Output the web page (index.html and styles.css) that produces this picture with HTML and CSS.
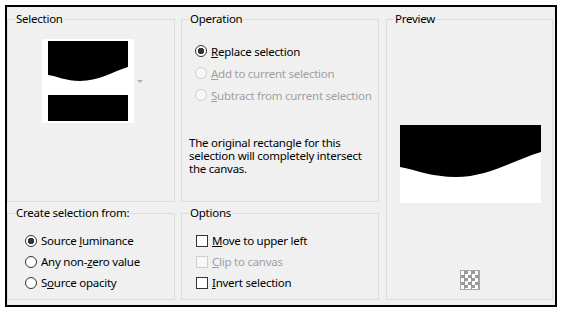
FILE: index.html
```html
<!DOCTYPE html>
<html lang="en">
<head>
  <meta charset="UTF-8">
  <title>Promote Selection</title>
  <link rel="stylesheet" href="styles.css">
</head>
<body>
  <div class="dialog">
    <div class="col col-left">
      <!-- Selection thumbnail -->
      <fieldset class="group group-tall">
        <legend>Selection</legend>
        <div class="thumb-row">
          <div class="thumb">
            <svg width="80" height="80" viewBox="0 0 80 80">
              <rect width="80" height="80" fill="#fff"/>
              <path d="M0 0 H80 V26 C64 31 50 40 32 40 C18 40 8 35 0 34 Z" fill="#000"/>
              <rect y="54" width="80" height="26" fill="#000"/>
            </svg>
          </div>
          <span class="drop-arrow"></span>
        </div>
      </fieldset>

      <fieldset class="group group-short">
        <legend>Create selection from:</legend>
        <div class="rows rows-source">
          <label class="row"><input type="radio" name="source" checked><span>Source <u>l</u>uminance</span></label>
          <label class="row"><input type="radio" name="source"><span>Any non-<u>z</u>ero value</span></label>
          <label class="row"><input type="radio" name="source"><span>S<u>o</u>urce opacity</span></label>
        </div>
      </fieldset>
    </div>

    <div class="col col-mid">
      <fieldset class="group group-tall">
        <legend>Operation</legend>
        <div class="rows rows-operation">
          <label class="row"><input type="radio" name="op" checked><span><u>R</u>eplace selection</span></label>
          <label class="row disabled"><input type="radio" name="op" disabled><span><u>A</u>dd to current selection</span></label>
          <label class="row disabled"><input type="radio" name="op" disabled><span><u>S</u>ubtract from current selection</span></label>
        </div>
        <p class="note">The original rectangle for this<br>selection will completely intersect<br>the canvas.</p>
      </fieldset>

      <fieldset class="group group-short">
        <legend>Options</legend>
        <div class="rows rows-options">
          <label class="row"><input type="checkbox"><span><u>M</u>ove to upper left</span></label>
          <label class="row disabled"><input type="checkbox" disabled><span><u>C</u>lip to canvas</span></label>
          <label class="row"><input type="checkbox"><span><u>I</u>nvert selection</span></label>
        </div>
      </fieldset>
    </div>

    <!-- Preview -->
    <fieldset class="group group-preview">
      <legend>Preview</legend>
      <svg class="preview-img" width="141" height="78" viewBox="0 0 141 78">
        <rect width="141" height="78" fill="#fff"/>
        <path d="M0 0 H141 V27 C112 36 88 52 56 52 C32 52 16 45 0 42 Z" fill="#000"/>
      </svg>
      <span class="checker"></span>
    </fieldset>
  </div>
</body>
</html>
```

FILE: styles.css
```css
/* General Layout */
body {
  margin: 0;
  background: #fff;
  font-family: "Noto Sans", "Open Sans", sans-serif;
  font-size: 11.5px;
  letter-spacing: -0.25px;
  color: #000;
}

.dialog {
  box-sizing: border-box;
  width: 552px;
  height: 302px;
  margin: 5px 0 0 5px;
  padding-top: 5px;
  border: 2px solid #000;
  background: #f0f0f0;
  display: flex;
  align-items: flex-start;
}

.col {
  display: flex;
  flex-direction: column;
  gap: 4px;
}

.col-left {
  width: 168px;
  margin-right: 6px;
}

.col-mid {
  width: 198px;
  margin-right: 7px;
}

/* Group boxes */
.group {
  box-sizing: border-box;
  margin: 0;
  padding: 0;
  min-width: 0;
  border: 1px solid #dcdcdc;
}

.group legend {
  margin-left: 7px;
  padding: 0 1px;
  line-height: 14px;
}

.group-tall {
  height: 190px;
}

.group-short {
  height: 94px;
}

.group-preview {
  width: 167px;
  height: 288px;
  display: flex;
  flex-direction: column;
  align-items: flex-start;
}

/* Selection thumbnail */
.thumb-row {
  display: flex;
  align-items: center;
  margin-top: 13px;
  padding-left: 34px;
}

.thumb {
  background: #fff;
  padding: 2px 6px;
}

.thumb svg {
  display: block;
}

.drop-arrow {
  margin-left: 3px;
  border-top: 3px solid #b0b0b0;
  border-left: 3px solid transparent;
  border-right: 3px solid transparent;
}

/* Radio / checkbox rows */
.row {
  display: flex;
  align-items: center;
  white-space: nowrap;
}

.rows-operation {
  margin-top: 14px;
  padding-left: 13px;
}

.rows-operation .row {
  height: 22px;
}

.rows-source {
  margin-top: 10px;
  padding-left: 17px;
}

.rows-options {
  margin-top: 10px;
  padding-left: 14px;
}

.rows-source .row,
.rows-options .row {
  height: 21px;
}

.row input {
  appearance: none;
  box-sizing: border-box;
  width: 12px;
  height: 12px;
  margin: 0 4px 0 0;
  border: 1px solid #333;
  background: #fff;
  flex: none;
}

.row input[type="radio"] {
  border-radius: 50%;
}

.row input[type="radio"]:checked {
  background: radial-gradient(circle, #333 0 3px, #fff 3.5px);
}

.row.disabled {
  color: #a0a0a0;
}

.row.disabled input {
  border-color: #cfcfcf;
  background: #f7f7f7;
}

.note {
  margin: 30px 0 0 7px;
  line-height: 13px;
  white-space: nowrap;
}

/* Preview */
.preview-img {
  display: block;
  margin: 99px 0 0 13px;
}

.checker {
  width: 18px;
  height: 18px;
  margin: 67px 0 0 73px;
  border: 1px solid #a8a8a8;
  background: repeating-conic-gradient(#9a9a9a 0 25%, #fff 0 50%) 0 0 / 7px 7px;
}
```
